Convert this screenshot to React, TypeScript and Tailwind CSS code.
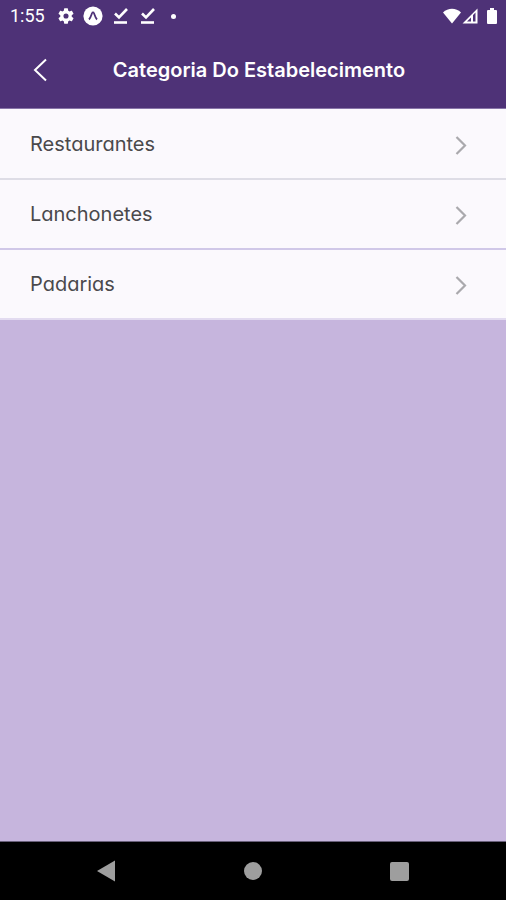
const categories = [
  { name: 'Restaurantes', border: 'border-[#dedde6]' },
  { name: 'Lanchonetes', border: 'border-[#d0c8e8]' },
  { name: 'Padarias', border: 'border-[#e2dbf0]' },
];

function DownloadDone() {
  return (
    <svg width="16" height="18" viewBox="0 0 16 18" fill="none" stroke="currentColor" aria-hidden="true">
      <path d="M2 6.5l4 4L14 2" strokeWidth="2.6" />
      <path d="M1 15.5h13" strokeWidth="2.6" />
    </svg>
  );
}

function StatusBar() {
  return (
    <div className="flex h-8 items-center justify-between pr-2 pl-[10px]">
      <div className="flex items-center">
        <span className="w-12 font-[Roboto,sans-serif] text-lg leading-8">1:55</span>
        <svg width="16" height="18" viewBox="2 2 20 20" fill="currentColor" aria-hidden="true">
          <path d="M19.14 12.94c.04-.3.06-.61.06-.94s-.02-.64-.07-.94l2.03-1.58a.49.49 0 0 0 .12-.61l-1.92-3.32a.49.49 0 0 0-.59-.22l-2.39.96a7 7 0 0 0-1.62-.94l-.36-2.54a.48.48 0 0 0-.48-.41h-3.84a.48.48 0 0 0-.47.41l-.36 2.54c-.59.24-1.13.57-1.62.94l-2.39-.96a.48.48 0 0 0-.59.22L2.74 8.87a.48.48 0 0 0 .12.61l2.03 1.58a6 6 0 0 0 0 1.88l-2.03 1.58a.49.49 0 0 0-.12.61l1.92 3.32c.12.22.37.29.59.22l2.39-.96c.5.38 1.03.7 1.62.94l.36 2.54c.05.24.24.41.48.41h3.84c.24 0 .44-.17.47-.41l.36-2.54a7 7 0 0 0 1.62-.94l2.39.96c.22.08.47 0 .59-.22l1.92-3.32a.48.48 0 0 0-.12-.61zM12 15.2a3.2 3.2 0 1 1 0-6.4 3.2 3.2 0 0 1 0 6.4z" />
        </svg>
        <svg className="ml-[9px]" width="20" height="20" viewBox="0 0 20 20" aria-hidden="true">
          <circle cx="10" cy="10" r="9.6" fill="currentColor" />
          <path d="M6 13.5C7.5 12 8.3 9 9.1 7c.3-.9 1.5-.9 1.8 0 .8 2 1.600 5 3.100 6.500" fill="none" stroke="#4e3277" strokeWidth="1.8" />
        </svg>
        <div className="ml-[10px] flex items-center gap-[11px]">
          <DownloadDone />
          <DownloadDone />
          <span className="ml-1 size-[5px] rounded-full bg-white" />
        </div>
      </div>
      <svg width="56" height="18" viewBox="0 0 56 18" fill="currentColor" aria-hidden="true">
        <path d="M1 5.5C6 .5 14 .5 19 5.5L10 16.5z" />
        <path fillRule="evenodd" d="M20.5 16.5L35.5 1.500v15zM25 14.500h4v-4zM31 8v6.500h2.500V5.500z" />
        <path d="M46 3h2V1h4v2h2q1 0 1 1v12q0 1-1 1h-8q-1 0-1-1V4q0-1 1-1z" />
      </svg>
    </div>
  );
}

export default function App() {
  return (
    <div className="flex min-h-screen flex-col bg-[#c6b5dd] font-[Inter,sans-serif]">
      <header className="border-b border-[#8875a8] bg-[#4e3277] text-white">
        <StatusBar />
        <div className="grid h-[76px] grid-cols-[80px_1fr_68px] items-center">
          <button type="button" aria-label="Voltar" className="flex h-full items-center justify-center">
            <svg width="14" height="24" viewBox="0 0 14 24" fill="none" stroke="currentColor" strokeWidth="2" aria-hidden="true">
              <path d="M13 1.5L2 12l11 10.5" />
            </svg>
          </button>
          <h1 className="text-center text-xl font-semibold whitespace-nowrap">Categoria Do Estabelecimento</h1>
        </div>
      </header>
      <main className="flex-1">
        <ul className="bg-[#fbf9fd] pt-px">
          {categories.map((category) => (
            <li key={category.name} className={`border-b-2 ${category.border}`}>
              <button
                type="button"
                className="flex h-[68px] w-full items-center justify-between pr-[39px] pl-[30px] text-left text-[#4a494c]"
              >
                <span className="text-xl [font-feature-settings:'cv11']">{category.name}</span>
                <svg width="12" height="22" viewBox="0 0 12 22" fill="none" stroke="#aaa9ad" strokeWidth="2.2" aria-hidden="true">
                  <path d="M1.5 4L10 12.500 1.500 21" />
                </svg>
              </button>
            </li>
          ))}
        </ul>
      </main>
      <nav className="flex h-[59px] items-center justify-between border-t border-[#69607a] bg-black pr-[97px] pl-24 text-[#9e9e9e]">
        <button type="button" aria-label="Voltar">
          <svg width="20" height="22" viewBox="0 0 20 22" fill="currentColor" aria-hidden="true">
            <path d="M1 11L19 .5v21z" />
          </svg>
        </button>
        <button type="button" aria-label="Início" className="size-[18px] rounded-full bg-[#9e9e9e]" />
        <button type="button" aria-label="Recentes" className="size-[19px] rounded-xs bg-[#9e9e9e]" />
      </nav>
    </div>
  );
}
